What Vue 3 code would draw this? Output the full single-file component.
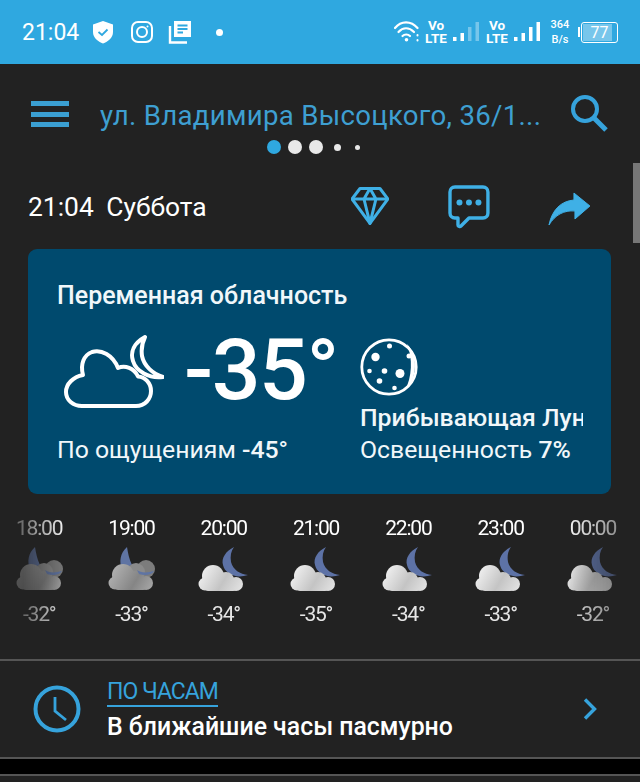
<template>
  <div class="screen">
    <svg width="0" height="0" class="defs">
      <defs>
        <linearGradient id="cloudLight" gradientUnits="userSpaceOnUse" x1="4" y1="22" x2="44" y2="46">
          <stop offset="0" stop-color="#f2f2f2" />
          <stop offset="0.55" stop-color="#c4c4c4" />
          <stop offset="1" stop-color="#e4e4e4" />
        </linearGradient>
        <linearGradient id="cloudDim" gradientUnits="userSpaceOnUse" x1="4" y1="22" x2="44" y2="46">
          <stop offset="0" stop-color="#b4b4b4" />
          <stop offset="0.6" stop-color="#858585" />
          <stop offset="1" stop-color="#a8a8a8" />
        </linearGradient>
        <symbol id="cloudShape" viewBox="0 0 52 48">
          <circle cx="15" cy="31" r="11" />
          <circle cx="7" cy="39" r="6.5" />
          <circle cx="28" cy="35" r="8" />
          <circle cx="38" cy="39" r="7" />
          <rect x="7" y="36" width="31" height="10" rx="3" />
        </symbol>
      </defs>
    </svg>

    <header class="status">
      <span class="status-time">21:04</span>
      <svg class="st-shield" width="22" height="24" viewBox="0 0 22 24">
        <path d="M11 1 L21 4.500 V12 C21 18 16 21.500 11 23.500 C6 21.500 1 18 1 12 V4.500 Z" fill="#fff" />
        <path d="M6.500 12 L10 15 L15.500 9.500" fill="none" stroke="#2fa8e0" stroke-width="1.800" />
      </svg>
      <svg width="24" height="24" viewBox="0 0 24 24" fill="none" stroke="#fff" stroke-width="2">
        <rect x="2" y="2" width="20" height="20" rx="6" />
        <circle cx="12" cy="12" r="5" />
        <circle cx="17.500" cy="6.500" r="1" fill="#fff" stroke="none" />
      </svg>
      <svg class="st-news" width="24" height="24" viewBox="0 0 24 24">
        <path d="M6 1 H23 V17 H6 Z" fill="#fff" />
        <path d="M2 6 V22.500 H19" fill="none" stroke="#fff" stroke-width="2.400" />
        <path d="M9.500 5.500 H19.500 M9.500 9 H19.500 M9.500 12.500 H15" stroke="#2fa8e0" stroke-width="2" />
      </svg>
      <span class="status-dot"></span>
      <div class="status-right">
        <svg width="25" height="22" viewBox="0 0 25 22" fill="none" stroke="#fff" stroke-width="2.200" stroke-linecap="round">
          <path d="M1 7 C7 -0.500 17 -0.500 23.500 7" />
          <path d="M4.500 11 C9 6 15 6 20 11" />
          <path d="M8.500 15 C10.500 13 14 13 16 15" />
          <circle cx="12.500" cy="18.800" r="1.800" fill="#fff" stroke="none" />
          <path d="M23.500 14 V14.400 M23.500 19 V19.400" stroke-width="2" />
        </svg>
        <span class="volte"><span>Vo</span><span>LTE</span></span>
        <svg class="bars" width="26" height="20" viewBox="0 0 26 20" fill="#fff">
          <rect x="0" y="15" width="3.500" height="4" />
          <rect x="7.500" y="11" width="3.500" height="8" />
          <rect x="15" y="5" width="3.500" height="14" opacity="0.35" />
          <rect x="22.500" y="0" width="3.500" height="19" opacity="0.35" />
        </svg>
        <span class="volte second"><span>Vo</span><span>LTE</span></span>
        <svg class="bars" width="26" height="20" viewBox="0 0 26 20" fill="#fff">
          <rect x="0" y="15" width="3.500" height="4" />
          <rect x="7.500" y="11" width="3.500" height="8" />
          <rect x="15" y="5" width="3.500" height="14" />
          <rect x="22.500" y="0" width="3.500" height="19" />
        </svg>
        <span class="speed"><span>364</span><span>B/s</span></span>
        <div class="battery">
          <i class="battery-nub"></i>
          <div class="battery-body">
            <i class="battery-fill"></i>
            <span>77</span>
          </div>
        </div>
      </div>
    </header>

    <div class="toolbar">
      <div class="burger"><i></i><i></i><i></i></div>
      <span class="address">ул. Владимира Высоцкого, 36/1...</span>
      <svg class="search" width="38" height="38" viewBox="0 0 38 38" fill="none" stroke="#36a3dc" stroke-width="4">
        <circle cx="15" cy="15" r="12" />
        <path d="M24 24 L36 36" stroke-width="5" />
      </svg>
    </div>

    <div class="pager">
      <i class="on"></i><i></i><i></i><i class="small"></i><i class="tiny"></i>
    </div>

    <div class="date-row">
      <span class="date-time">21:04</span>
      <span class="date-day">Суббота</span>
      <svg class="gem" width="38" height="38" viewBox="0 0 38 38" fill="none" stroke="#3fb0e6" stroke-width="3" stroke-linejoin="round">
        <path d="M9 1.500 H29 L37 12 L19 36.500 L1 12 Z" />
        <path d="M1 12 H37 M13 12 L19 1.500 L25 12 M13 12 L19 36.500 L25 12" />
      </svg>
      <svg class="chat" width="42" height="44" viewBox="0 0 42 44" fill="none">
        <path d="M7 2 H35 C38 2 40 4 40 7 V28 C40 31 38 33 35 33 H21 L13 41 C12 42 10 41.500 10 40 V33 H7 C4 33 2 31 2 28 V7 C2 4 4 2 7 2 Z" stroke="#3fb0e6" stroke-width="3.400" stroke-linejoin="round" />
        <circle cx="11.500" cy="17.500" r="3" fill="#3fb0e6" />
        <circle cx="21" cy="17.500" r="3" fill="#3fb0e6" />
        <circle cx="30.500" cy="17.500" r="3" fill="#3fb0e6" />
      </svg>
      <svg class="share" width="42" height="34" viewBox="0 0 42 34">
        <path d="M26 1 L42 14 L27 27 V19 C16 18 7 23 1 33 C4 18 13 9 26 8 Z" fill="#3fb0e6" stroke="#3fb0e6" stroke-width="1" stroke-linejoin="round" />
      </svg>
    </div>

    <section class="card">
      <h2 class="card-title">Переменная облачность</h2>
      <div class="card-body">
        <div class="card-left">
          <div class="now">
            <svg class="now-icon" width="100" height="74" viewBox="0 0 100 74" fill="none" stroke="#fff" stroke-width="4" stroke-linejoin="round">
              <path d="M18 71 H72 C81 71 87 64 87 56 C87 48 81 42 74 41.500 C70 33 61 30 54 33 C49 20 37 14 28 17 C20 20 16 29 19 40 C9 42 2 49 2 57 C2 65 9 71 18 71 Z" />
              <path d="M81 2 C70 8 66 17 69 26 C72 36 85 44 99 42 C89 39 80 31 78 21 C77 14 78 8 81 2 Z" />
            </svg>
            <span class="now-temp">-35°</span>
          </div>
          <p class="feels">По ощущениям <b>-45°</b></p>
        </div>
        <div class="card-right">
          <svg class="moon" width="58" height="58" viewBox="0 0 58 58">
            <circle cx="29" cy="29" r="27.200" fill="none" stroke="#fff" stroke-width="2.800" />
            <path d="M47 6 C58 17 58 41 45 52 C52 40 53 20 47 6 Z" fill="#fff" />
            <circle cx="49" cy="18" r="2.500" fill="#fff" />
            <circle cx="29.500" cy="8" r="2.500" fill="#fff" />
            <circle cx="15.500" cy="19" r="4.200" fill="#fff" />
            <circle cx="9.500" cy="33" r="2.300" fill="#fff" />
            <circle cx="24.500" cy="33" r="2.800" fill="#fff" />
            <circle cx="40" cy="35.500" r="4.500" fill="#fff" />
            <circle cx="19.500" cy="43" r="2.800" fill="#fff" />
            <circle cx="34.500" cy="50" r="2.300" fill="#fff" />
          </svg>
          <p class="phase">Прибывающая Луна</p>
          <p class="light">Освещенность <b>7%</b></p>
        </div>
      </div>
    </section>

    <div class="hours">
      <div v-for="h in hours" :key="h.time" class="hour">
        <span class="hour-time">{{ h.time }}</span>
        <svg class="hour-icon" width="52" height="48" viewBox="0 0 52 48">
          <template v-if="h.dim">
            <path d="M22 2 C15 8 14 17 17 24 L27 20 C24 14 23 8 22 2 Z" fill="#5f74a3" />
            <circle cx="41" cy="24" r="9" fill="#7c7c7c" />
            <circle cx="31" cy="27" r="9" fill="#8a8a8a" />
            <use href="#cloudShape" width="52" height="48" x="3" y="-1" fill="url(#cloudDim)" />
            <path d="M32 25 C36 28 42 28 49 26 C47 30 40 31 34 29 Z" fill="#5f74a3" />
          </template>
          <template v-else>
            <path d="M36 2 C28 6 23 13 25 20 C27 29 38 34 50 30 C42 29 35 25 33 17 C32 11 33 6 36 2 Z" fill="#5d72a6" />
            <use href="#cloudShape" width="52" height="48" fill="url(#cloudLight)" />
          </template>
        </svg>
        <span class="hour-temp">{{ h.temp }}</span>
      </div>
    </div>

    <div class="forecast">
      <svg class="clock" width="48" height="48" viewBox="0 0 48 48" fill="none" stroke="#36a3dc">
        <circle cx="24" cy="24" r="21.500" stroke-width="4" />
        <path d="M22 12 V26 L33 35" stroke-width="2.800" />
      </svg>
      <div class="forecast-text">
        <span class="forecast-label">ПО ЧАСАМ</span>
        <span class="forecast-desc">В ближайшие часы пасмурно</span>
      </div>
      <svg class="chevron" width="14" height="22" viewBox="0 0 14 22" fill="none" stroke="#36a3dc" stroke-width="3.400">
        <path d="M2 1.500 L11.500 11 L2 20.500" />
      </svg>
    </div>

    <div class="gap"></div>

    <i class="scrollbar"></i>
  </div>
</template>

<script setup>
const hours = [
  { time: '18:00', temp: '-32°', dim: true },
  { time: '19:00', temp: '-33°', dim: true },
  { time: '20:00', temp: '-34°', dim: false },
  { time: '21:00', temp: '-35°', dim: false },
  { time: '22:00', temp: '-34°', dim: false },
  { time: '23:00', temp: '-33°', dim: false },
  { time: '00:00', temp: '-32°', dim: false },
]
</script>

<style>
html,
body {
  margin: 0;
  background: #222;
}
</style>

<style scoped>
.screen {
  position: relative;
  width: 640px;
  height: 782px;
  overflow: hidden;
  background: #222222;
  font-family: Roboto, "Liberation Sans", sans-serif;
  color: #fff;
}

.defs {
  position: absolute;
}

.status {
  display: flex;
  align-items: center;
  height: 64px;
  padding: 0 22px;
  box-sizing: border-box;
  background: #2fa8e0;
}

.status-time {
  font-size: 23px;
  width: 57px;
  margin-right: 13px;
}

.status > svg {
  margin-right: 16px;
}

.status > svg.st-news {
  margin-left: -2px;
}

.status-dot {
  width: 7px;
  height: 7px;
  margin-left: 8px;
  border-radius: 50%;
  background: #fff;
}

.status-right {
  display: flex;
  align-items: center;
  margin-left: auto;
}

.volte {
  display: flex;
  flex-direction: column;
  align-items: center;
  width: 24px;
  margin-left: 5px;
  font-size: 13.500px;
  font-weight: 700;
  line-height: 13px;
}

.volte.second {
  margin-left: 6px;
}

.bars {
  margin-left: 5px;
}

.speed {
  display: flex;
  flex-direction: column;
  align-items: center;
  width: 20px;
  margin: 0 8px 0 10px;
  font-size: 11px;
  font-weight: 500;
  line-height: 15px;
}

.battery {
  display: flex;
  align-items: center;
}

.battery-nub {
  width: 2px;
  height: 10px;
  margin-right: 1px;
  background: #fff;
}

.battery-body {
  position: relative;
  width: 35px;
  height: 19px;
  border: 1.500px solid #fff;
  border-radius: 3px;
  text-align: center;
  font-size: 16px;
  line-height: 19px;
}

.battery-fill {
  position: absolute;
  top: 1px;
  bottom: 1px;
  left: 1px;
  width: 84%;
  background: rgba(255, 255, 255, 0.35);
}

.battery-body span {
  position: relative;
}

.toolbar {
  display: flex;
  align-items: center;
  height: 68px;
  padding: 34px 32px 0 31px;
  box-sizing: border-box;
}

.burger {
  display: flex;
  flex-direction: column;
  gap: 5.500px;
  width: 38px;
  margin-top: -2px;
}

.burger i {
  height: 5px;
  background: #3b9fd2;
}

.address {
  margin-left: 31px;
  font-size: 27.600px;
  letter-spacing: 0.3px;
  color: #3e9fd1;
  white-space: nowrap;
}

.search {
  margin-left: auto;
  margin-top: -4px;
}

.pager {
  display: flex;
  align-items: center;
  gap: 7px;
  height: 30px;
  padding-left: 267px;
}

.pager i {
  width: 14px;
  height: 14px;
  border-radius: 50%;
  background: #e8e8e8;
}

.pager i.on {
  background: #2fa8e0;
}

.pager i.small {
  width: 7px;
  height: 7px;
  margin: 0 3px 0 4px;
}

.pager i.tiny {
  width: 5px;
  height: 5px;
  margin-left: 4px;
}

.date-row {
  display: flex;
  align-items: center;
  height: 60px;
  margin-bottom: 12px;
  padding: 15px 50px 0 28px;
  font-size: 26.400px;
}

.date-time {
  margin-right: 12.500px;
}

.gem {
  margin-left: 144.500px;
  margin-top: -2px;
}

.chat {
  margin-left: 59px;
}

.share {
  margin-left: 58px;
  margin-top: 3px;
}

.card {
  margin: 0 29px 0 28px;
  height: 245px;
  padding: 32px 0 0 29px;
  box-sizing: border-box;
  border-radius: 9px;
  background: #004a6e;
  color: #f1f7fa;
}

.card-title {
  margin: 0;
  font-size: 25px;
  font-weight: 500;
  line-height: 30px;
}

.card-body {
  display: flex;
  margin-top: 18px;
}

.card-left {
  width: 303px;
}

.now {
  display: flex;
  align-items: center;
  height: 82px;
}

.now-icon {
  margin-left: 7px;
  margin-top: 4px;
}

.now-temp {
  margin-left: 20px;
  font-size: 86px;
  font-weight: 500;
  line-height: 82px;
  color: #fff;
  letter-spacing: -1.500px;
}

.feels,
.light,
.phase {
  margin: 0;
  font-size: 24.800px;
  line-height: 30px;
  white-space: nowrap;
}

.feels {
  margin-top: 24px;
}

.feels b,
.light b {
  font-weight: 500;
}

.card-right {
  width: 223px;
  overflow: hidden;
}

.moon {
  display: block;
  margin-top: 9px;
}

.phase {
  margin-top: 7px;
  font-weight: 500;
  overflow: hidden;
}

.light {
  margin-top: 2px;
}

.hours {
  display: flex;
  padding: 22px 0 0 0;
  margin-left: -7px;
  width: 653px;
  height: 165px;
  box-sizing: border-box;
  -webkit-mask-image: linear-gradient(90deg, rgba(0, 0, 0, 0.35) 30px, #000 75px, #000 570px, rgba(0, 0, 0, 0.45) 630px);
  mask-image: linear-gradient(90deg, rgba(0, 0, 0, 0.35) 30px, #000 75px, #000 570px, rgba(0, 0, 0, 0.45) 630px);
}

.hour {
  display: flex;
  flex-direction: column;
  align-items: center;
  width: 92.300px;
  flex: none;
}

.hour-time,
.hour-temp {
  font-size: 21px;
  letter-spacing: -1.200px;
  line-height: 24px;
}

.hour-icon {
  margin-top: 5px;
}

.hour-temp {
  margin-top: 9px;
  color: #e6e6e6;
}

.forecast {
  display: flex;
  align-items: center;
  height: 100px;
  box-sizing: border-box;
  padding: 0 43px 0 33px;
  border-top: 2px solid #555;
  border-bottom: 2px solid #555;
}

.forecast-text {
  display: flex;
  flex-direction: column;
  align-items: flex-start;
  margin-left: 26px;
  padding-top: 3px;
}

.forecast-label {
  padding-bottom: 1px;
  border-bottom: 2px solid #36a3dc;
  font-size: 23px;
  letter-spacing: -1px;
  line-height: 25px;
  color: #36a3dc;
}

.forecast-desc {
  margin-top: 5px;
  font-size: 24.850px;
  font-weight: 500;
  line-height: 30px;
  white-space: nowrap;
}

.chevron {
  margin-left: auto;
}

.gap {
  height: 15px;
  background: #000;
  border-bottom: 2px solid #555;
}

.scrollbar {
  position: absolute;
  top: 163px;
  right: 0;
  width: 7px;
  height: 80px;
  background: #777;
}
</style>
